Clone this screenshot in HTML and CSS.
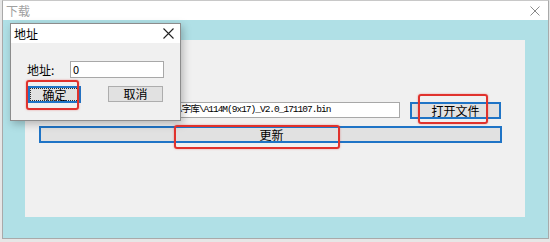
FILE: index.html
```html
<!DOCTYPE html>
<html lang="zh-CN">
<head>
    <meta charset="utf-8">
    <title>下载</title>
    <link rel="stylesheet" href="styles.css">
</head>
<body>
    <div class="stage">
        <div class="window">
            <div class="titleBar">
                <span class="titleText">下载</span>
                <svg class="closeIcon" width="10" height="10" viewBox="0 0 10 10">
                    <path d="M0.5 0.5 L9.5 9.5 M9.5 0.5 L0.5 9.5" stroke="#8a8a8a" stroke-width="1" fill="none"/>
                </svg>
            </div>
            <div class="client">
                <div class="panel">
                    <div class="fileRow">
                        <div class="pathBox">C:\Users\Admin\Desktop\点阵\字库\A114M(9x17)_V2.0_171107.bin</div>
                        <div class="btn btnDefault btnOpen">打开文件</div>
                    </div>
                    <div class="btn btnDefault btnUpdate">更新</div>
                </div>
            </div>
        </div>

        <div class="dialog">
            <div class="dlgTitle">
                <span>地址</span>
                <svg class="dlgClose" width="11" height="11" viewBox="0 0 11 11">
                    <path d="M0.5 0.5 L10.5 10.5 M10.5 0.5 L0.5 10.5" stroke="#222" stroke-width="1.1" fill="none"/>
                </svg>
            </div>
            <div class="dlgBody">
                <div class="dlgField">
                    <span class="dlgLabel">地址:</span>
                    <div class="dlgInput">0</div>
                </div>
                <div class="dlgButtons">
                    <div class="btn btnDefault btnOk"><span class="focusRing">确定</span></div>
                    <div class="btn btnCancel">取消</div>
                </div>
            </div>
        </div>

        <!-- annotation marks -->
        <div class="mark markOk"></div>
        <div class="mark markOpen"></div>
        <div class="mark markUpdate"></div>
    </div>
</body>
</html>
```

FILE: styles.css
```css
body
{
    margin:      0;
    background:  #e6e6e6;
    font-family: "Noto Sans CJK SC", "Noto Sans", sans-serif;
    font-size:   12px;
    color:       #000;
}

.stage
{
    position: relative;
    width:    550px;
    height:   242px;
    overflow: hidden;
}

.window
{
    margin-left: 2px;
    width:       545px;
    height:      237px;
    border:      1px solid #a9a9a9;
    border-top:  1px solid #c8c8c8;
    background:  #ffffff;
    display:     flex;
    flex-direction: column;
}

.titleBar
{
    height:      19px;
    display:     flex;
    align-items: center;
    padding:     0 6px 0 3px;
    background:  #ffffff;
}

.titleText
{
    color:     #a0a0a0;
    font-size: 12px;
    flex:      1;
    line-height: 1;
}

.closeIcon
{
    margin-right: 2px;
}

.client
{
    flex:        1;
    background:  #b0e0e6;
    padding:     20px 20px 20px 22px;
}

.panel
{
    width:       500px;
    height:      177px;
    background:  #f0f0f0;
    padding:     62px 0 0 14px;
    box-sizing:  border-box;
}

.fileRow
{
    display: flex;
    gap:     10px;
    height:  17px;
}

.pathBox
{
    width:          361px;
    height:         16px;
    box-sizing:     border-box;
    border:         1px solid #a8a8a8;
    background:     #ffffff;
    font-family:    "Liberation Mono", "Noto Sans CJK SC", monospace;
    font-size:      9.5px;
    letter-spacing: -1px;
    line-height:    14px;
    padding-left:   12px;
    white-space:    nowrap;
    overflow:       hidden;
}

.btn
{
    box-sizing:      border-box;
    background:      #e1e1e1;
    border:          1px solid #adadad;
    display:         flex;
    align-items:     center;
    justify-content: center;
    font-size:       12px;
    line-height:     1;
}

.btnDefault
{
    border: 2px solid #1f74c6;
}

.btnOpen
{
    width:  91px;
    height: 17px;
}

.btnUpdate
{
    margin-top: 7px;
    width:      463px;
    height:     17px;
    padding-left: 2px;
}

.dialog
{
    position:   absolute;
    left:       10px;
    top:        23px;
    width:      169px;
    height:     96px;
    border:     1px solid #8c8c8c;
    background: #f0f0f0;
    box-shadow: 2px 3px 8px rgba(0, 0, 0, 0.25);
    display:    flex;
    flex-direction: column;
}

.dlgTitle
{
    height:      19px;
    background:  #ffffff;
    display:     flex;
    align-items: center;
    justify-content: space-between;
    padding:     0 6px 0 3px;
    font-size:   12px;
}

.dlgBody
{
    flex:    1;
    padding: 18px 16px 0 16px;
}

.dlgField
{
    display:     flex;
    align-items: center;
    height:      16px;
}

.dlgLabel
{
    width: 43px;
}

.dlgInput
{
    width:       94px;
    height:      17px;
    box-sizing:  border-box;
    border:      1px solid #a8a8a8;
    background:  #ffffff;
    font-size:   11px;
    line-height: 15px;
    padding-left: 2px;
}

.dlgButtons
{
    display:         flex;
    justify-content: space-between;
    margin-top:      9px;
    padding-left:    1px;
}

.btnOk
{
    width:  53px;
    height: 17px;
}

.focusRing
{
    display:    flex;
    align-items: center;
    justify-content: center;
    width:      47px;
    height:     11px;
    outline:    1px dotted #2b2b2b;
}

.btnCancel
{
    width:  55px;
    height: 16px;
    margin-right: 1px;
}

.mark
{
    position:      absolute;
    border:        2px solid #e0322d;
    border-radius: 3px;
    box-sizing:    border-box;
    box-shadow:    0 0 2px rgba(224, 50, 45, 0.5);
}

.markOk
{
    left:   26px;
    top:    80px;
    width:  53px;
    height: 30px;
}

.markOpen
{
    left:   418px;
    top:    94px;
    width:  70px;
    height: 30px;
}

.markUpdate
{
    left:   174px;
    top:    125px;
    width:  166px;
    height: 24px;
}
```
